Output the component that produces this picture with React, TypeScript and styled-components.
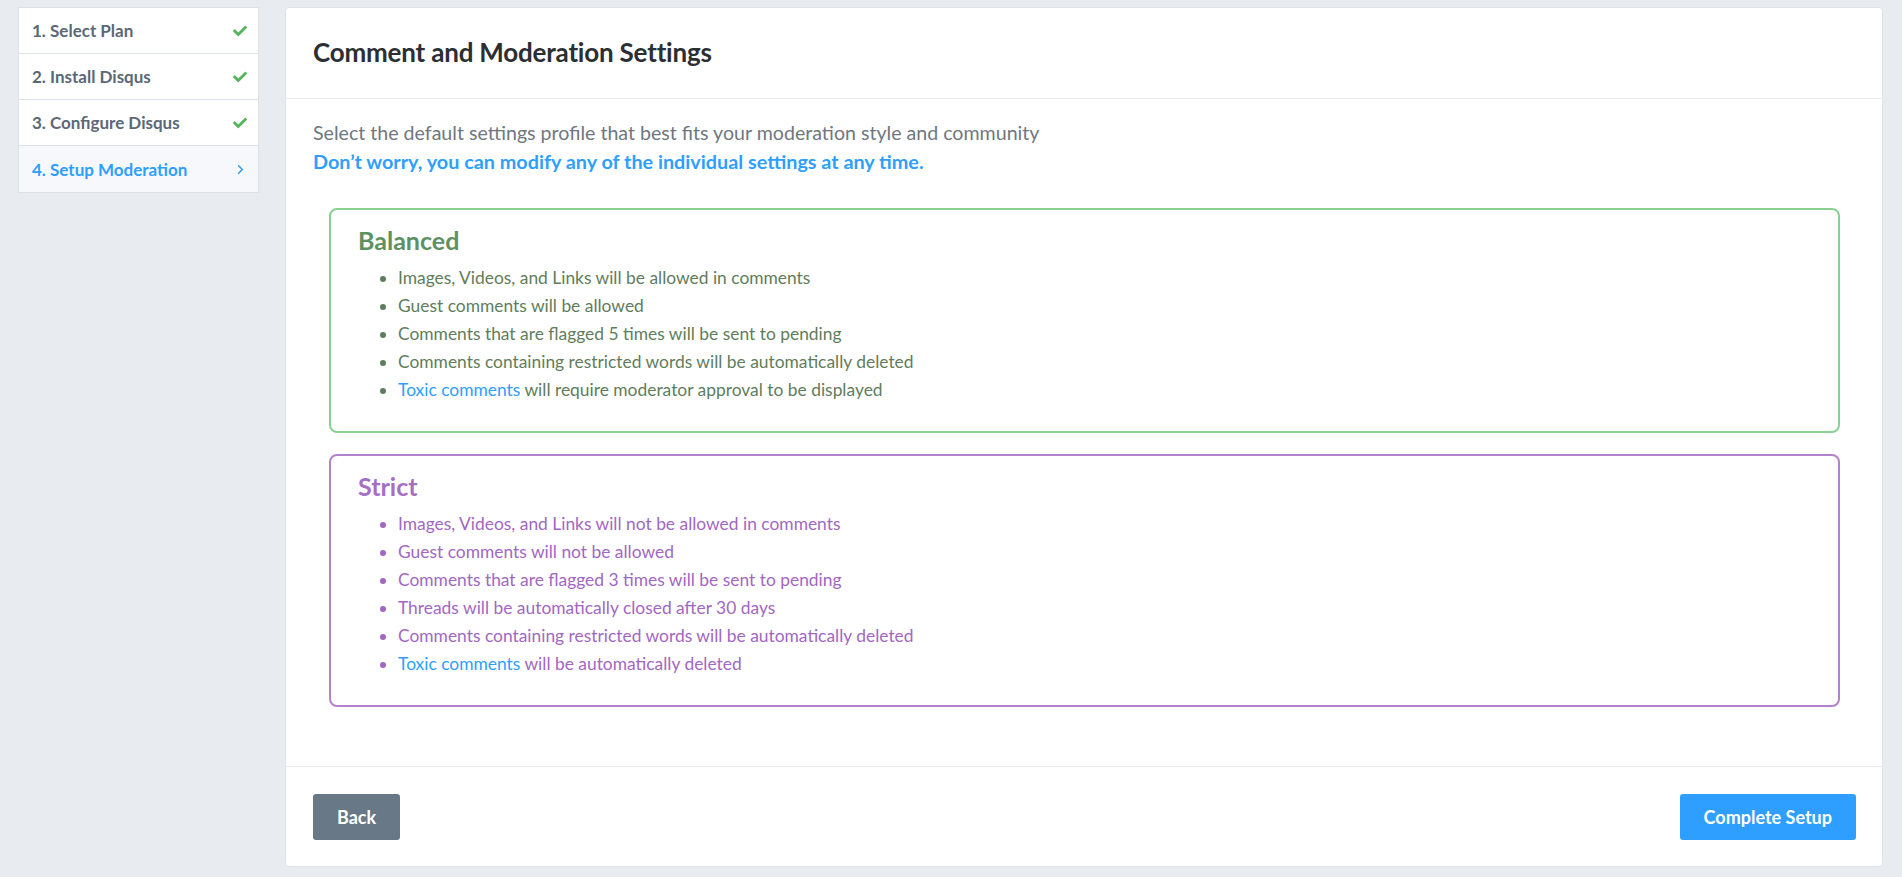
import React from "react";
import styled, { createGlobalStyle } from "styled-components";
import { FaCheck } from "react-icons/fa";
import { ChevronRight } from "lucide-react";

const GlobalStyle = createGlobalStyle`
  * { box-sizing: border-box; }
  html, body { margin: 0; padding: 0; background: #e8ecf0; }
  body { font-family: Lato, "Open Sans", sans-serif; -webkit-font-smoothing: antialiased; }
`;

const Page = styled.div`
  display: flex;
  align-items: flex-start;
  gap: 26px;
  padding: 7px 19px 10px 18px;
  min-height: 100vh;
`;

const Sidebar = styled.nav`
  flex: 0 0 241px;
  background: #fff;
  border: 1px solid #dde2e8;
  display: flex;
  flex-direction: column;
`;

const Step = styled.div<{ $active?: boolean }>`
  height: 46px;
  display: flex;
  align-items: center;
  justify-content: space-between;
  padding: 0 11px 0 13px;
  border-bottom: 1px solid #dde2e8;
  background: ${(p) => (p.$active ? "#f6f8fc" : "#fff")};
  color: ${(p) => (p.$active ? "#2e9fff" : "#5a6878")};
  font-size: 17px;
  font-weight: 700;
  &:last-child { border-bottom: none; }
`;

const Check = styled(FaCheck)`
  color: #56b45d;
  width: 14px;
  height: 14px;
`;

const Chevron = styled(ChevronRight)`
  color: #2e9fff;
  margin-right: -1px;
`;

const Card = styled.main`
  flex: 1;
  background: #fff;
  border: 1px solid #e0e4e9;
  border-radius: 4px;
  display: flex;
  flex-direction: column;
`;

const Header = styled.header`
  height: 91px;
  display: flex;
  align-items: center;
  padding: 0 27px 2px;
  border-bottom: 1px solid #e8ebef;
`;

const Title = styled.h1`
  margin: 0;
  font-size: 26px;
  font-weight: 700;
  color: #2b2f33;
  letter-spacing: -0.2px;
`;

const Body = styled.section`
  padding: 19px 27px 59px;
  display: flex;
  flex-direction: column;
`;

const Intro = styled.p`
  margin: 0 0 32px;
  font-size: 19.6px;
  line-height: 29px;
  color: #6f7780;
`;

const Emph = styled.strong`
  display: block;
  color: #2e9fff;
  font-weight: 700;
  font-size: 19.8px;
`;

const Profiles = styled.div`
  display: flex;
  flex-direction: column;
  gap: 21px;
  margin: 0 15px 0 16px;
`;

const Profile = styled.div<{ $border: string; $text: string }>`
  border: 2px solid ${(p) => p.$border};
  border-radius: 8px;
  padding: 14px 27px 27px;
  color: ${(p) => p.$text};
`;

const ProfileTitle = styled.h2<{ $color: string }>`
  margin: 0 0 8px;
  font-size: 25px;
  line-height: 32px;
  font-weight: 700;
  color: ${(p) => p.$color};
`;

const List = styled.ul`
  margin: 0;
  padding-left: 40px;
`;

const Item = styled.li`
  font-size: 17.4px;
  line-height: 28px;
`;

const Link = styled.span`
  color: #2e9fff;
`;

const Footer = styled.footer`
  border-top: 1px solid #e8ebef;
  padding: 27px 26px 26px 27px;
  display: flex;
  justify-content: space-between;
`;

const Button = styled.button<{ $primary?: boolean }>`
  height: 46px;
  padding: 0 ${(p) => (p.$primary ? "24px" : "24px")};
  border: none;
  border-radius: 3px;
  background: ${(p) => (p.$primary ? "#2e9fff" : "#687886")};
  color: #fff;
  font-family: inherit;
  font-size: 18px;
  font-weight: 700;
  cursor: pointer;
`;

const steps = [
  { label: "1. Select Plan", done: true },
  { label: "2. Install Disqus", done: true },
  { label: "3. Configure Disqus", done: true },
  { label: "4. Setup Moderation", done: false },
];

const balanced: React.ReactNode[] = [
  "Images, Videos, and Links will be allowed in comments",
  "Guest comments will be allowed",
  "Comments that are flagged 5 times will be sent to pending",
  "Comments containing restricted words will be automatically deleted",
  <><Link>Toxic comments</Link> will require moderator approval to be displayed</>,
];

const strict: React.ReactNode[] = [
  "Images, Videos, and Links will not be allowed in comments",
  "Guest comments will not be allowed",
  "Comments that are flagged 3 times will be sent to pending",
  "Threads will be automatically closed after 30 days",
  "Comments containing restricted words will be automatically deleted",
  <><Link>Toxic comments</Link> will be automatically deleted</>,
];

export default function App() {
  return (
    <>
      <GlobalStyle />
      <Page>
        <Sidebar>
          {steps.map((s) => (
            <Step key={s.label} $active={!s.done}>
              <span>{s.label}</span>
              {s.done ? <Check /> : <Chevron size={15} strokeWidth={2.5} />}
            </Step>
          ))}
        </Sidebar>
        <Card>
          <Header>
            <Title>Comment and Moderation Settings</Title>
          </Header>
          <Body>
            <Intro>
              Select the default settings profile that best fits your moderation style and community
              <Emph>Don’t worry, you can modify any of the individual settings at any time.</Emph>
            </Intro>
            <Profiles>
              <Profile $border="#8ad091" $text="#5f7d5c">
                <ProfileTitle $color="#5d9162">Balanced</ProfileTitle>
                <List>
                  {balanced.map((b, i) => (
                    <Item key={i}>{b}</Item>
                  ))}
                </List>
              </Profile>
              <Profile $border="#b482cc" $text="#a267c2">
                <ProfileTitle $color="#a56fc4">Strict</ProfileTitle>
                <List>
                  {strict.map((b, i) => (
                    <Item key={i}>{b}</Item>
                  ))}
                </List>
              </Profile>
            </Profiles>
          </Body>
          <Footer>
            <Button>Back</Button>
            <Button $primary>Complete Setup</Button>
          </Footer>
        </Card>
      </Page>
    </>
  );
}
